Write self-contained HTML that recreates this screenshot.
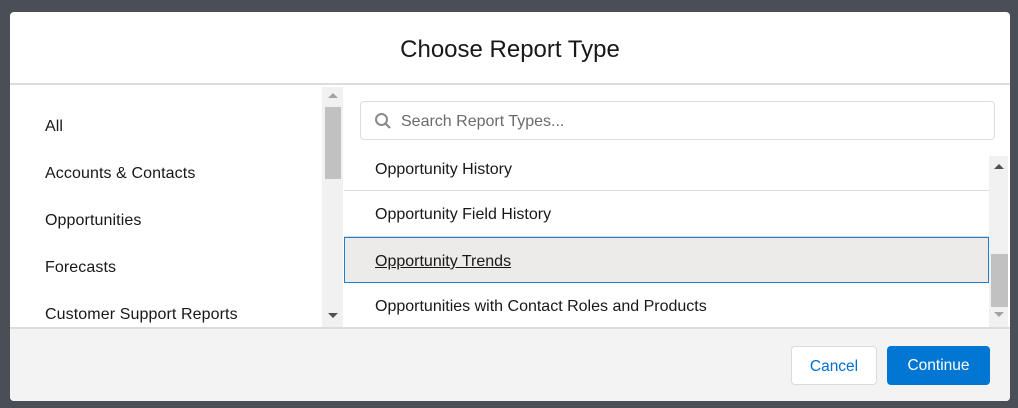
<!DOCTYPE html>
<html><head><style>
*{box-sizing:border-box;margin:0;padding:0}
body{width:1018px;height:408px;background:#4a4e57;font-family:"Liberation Sans",sans-serif;position:relative;overflow:hidden;color:#181818}
.m{position:absolute;left:10px;top:12px;width:1000px;height:389px;background:#fff;border-radius:4px;overflow:hidden}
.h{height:73px;border-bottom:2px solid #dcdcdc;text-align:center;font-size:24px;line-height:76px;color:#181818}
.l{position:absolute;left:0;top:75px;width:312px;height:241px}
.l div{position:absolute;left:35px;font-size:16px;letter-spacing:0.1px}
.sb{position:absolute;background:#f1f1f1}
.th{position:absolute;background:#c1c1c1}
.s{position:absolute;left:350px;top:89px;width:635px;height:39px;border:1px solid #d8dde6;border-radius:4px;font-size:16px;color:#6b6b6b;line-height:40px;padding-left:40px}
.it{position:absolute;left:334px;width:645px;height:46px;font-size:16px;line-height:48px;padding-left:31px;border-bottom:1px solid #dddbda}
.f{position:absolute;left:0;top:315px;width:1000px;height:74px;background:#f3f3f3;border-top:2px solid #dcdcdc}
.b{position:absolute;top:17px;height:39px;border-radius:4px;font-size:15.5px;line-height:39px;text-align:center}
</style></head><body>
<div class="m">
<div class="h">Choose Report Type</div>
<div class="l">
<div style="top:31px">All</div>
<div style="top:78px">Accounts &amp; Contacts</div>
<div style="top:125px">Opportunities</div>
<div style="top:172px">Forecasts</div>
<div style="top:219px">Customer Support Reports</div>
</div>
<div class="sb" style="left:312px;top:75px;width:21px;height:240px"></div>
<div class="th" style="left:315px;top:95px;width:16px;height:72px"></div>
<div style="position:absolute;left:318px;top:81px;border:5px solid transparent;border-bottom-color:#a3a3a3;border-top:0;width:0"></div>
<div style="position:absolute;left:318px;top:301px;border:5px solid transparent;border-top-color:#505050;border-bottom:0;width:0"></div>
<div class="s"><svg style="position:absolute;left:13px;top:10px" width="18" height="18" viewBox="0 0 18 18"><circle cx="7.5" cy="7.5" r="5.5" fill="none" stroke="#8a8a8a" stroke-width="2"/><path d="M11.5 11.5L16 16" stroke="#8a8a8a" stroke-width="2.2"/></svg>Search Report Types...</div>
<div class="it" style="top:133px;height:46px;line-height:50px">Opportunity History</div>
<div class="it" style="top:179px">Opportunity Field History</div>
<div class="it" style="top:225px;background:#ecebea;border:1px solid #1b7fd6;text-decoration:underline;padding-left:30px;line-height:47px">Opportunity Trends</div>
<div class="it" style="top:271px;border:0">Opportunities with Contact Roles and Products</div>
<div class="sb" style="left:979px;top:144px;width:19px;height:171px"></div>
<div class="th" style="left:981px;top:242px;width:17px;height:53px"></div>
<div style="position:absolute;left:984px;top:152px;border:5px solid transparent;border-bottom-color:#505050;border-top:0;width:0"></div>
<div style="position:absolute;left:984px;top:300px;border:5px solid transparent;border-top-color:#a3a3a3;border-bottom:0;width:0"></div>
<div class="f">
<div class="b" style="left:781px;width:86px;background:#fff;border:1px solid #dddbda;color:#0070d2">Cancel</div>
<div class="b" style="left:877px;width:103px;background:#0176d3;color:#fff">Continue</div>
</div>
</div>
</body></html>
